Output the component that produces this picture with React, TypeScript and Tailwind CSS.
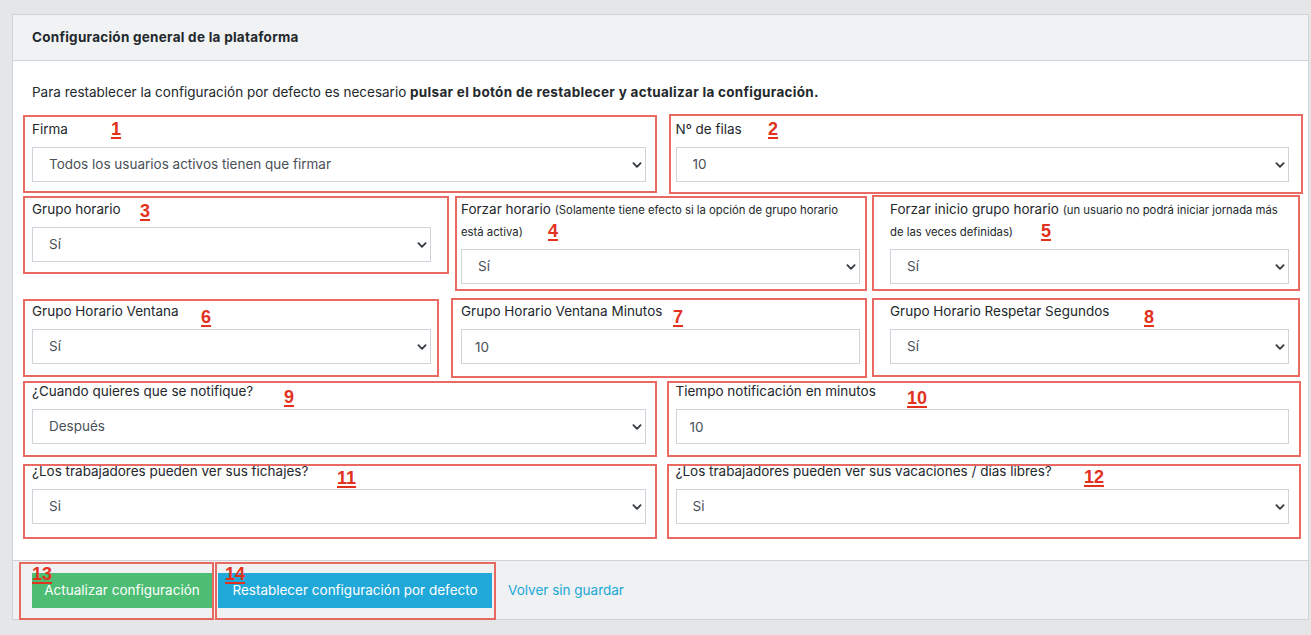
import React from "react";

const font = { fontFamily: "Inter, 'Liberation Sans', sans-serif" };

// Chevron drawn like the native select arrow
const Chevron = () => (
  <svg
    className="pointer-events-none absolute right-[4px] top-1/2 -translate-y-1/2"
    width="10"
    height="6"
    viewBox="0 0 16 10"
    fill="none"
  >
    <path d="M2 2l6 6 6-6" stroke="#343a40" strokeWidth="3" strokeLinecap="round" strokeLinejoin="round" />
  </svg>
);

const SelectBox = ({ value }: { value: string }) => (
  <div className="relative">
    <select
      defaultValue={value}
      className="block h-[35px] w-full appearance-none rounded-none border border-[#ced4da] bg-white pl-[16px] pr-6 text-[13.5px] text-[#495057] outline-none"
      style={font}
    >
      <option>{value}</option>
    </select>
    <Chevron />
  </div>
);

const InputBox = ({ value }: { value: string }) => (
  <input
    defaultValue={value}
    className="block h-[35px] w-full rounded-none border border-[#ced4da] bg-white pl-[13px] text-[13.5px] text-[#495057] outline-none"
    style={font}
  />
);

const Label = ({ children, tall }: { children: React.ReactNode; tall?: boolean }) => (
  <label
    className={
      tall
        ? "-mt-[2px] mb-[7px] block h-[44px] overflow-visible text-[13.5px] leading-[22px] text-[#23282c]"
        : "mb-[9px] block h-[18px] text-[13.5px] leading-[18px] text-[#23282c]"
    }
  >
    {children}
  </label>
);

const Small = ({ children }: { children: React.ReactNode }) => (
  <small className="align-baseline text-[11.3px] leading-[0]">{children}</small>
);

// Red annotation boxes and numbers laid over the screenshot
const boxes = [
  { l: 23, t: 115, r: 657, b: 193 },
  { l: 669, t: 114, r: 1303, b: 194 },
  { l: 23, t: 196, r: 449, b: 274 },
  { l: 455, t: 196, r: 867, b: 291 },
  { l: 872, t: 195, r: 1300, b: 291 },
  { l: 23, t: 299, r: 439, b: 377 },
  { l: 451, t: 298, r: 867, b: 378 },
  { l: 872, t: 298, r: 1300, b: 377 },
  { l: 23, t: 381, r: 657, b: 457 },
  { l: 667, t: 381, r: 1301, b: 457 },
  { l: 23, t: 464, r: 657, b: 539 },
  { l: 667, t: 464, r: 1301, b: 539 },
  { l: 19, t: 562, r: 214, b: 620 },
  { l: 215, t: 562, r: 496, b: 620 },
];

const numbers = [
  { n: "1", x: 111, y: 122 },
  { n: "2", x: 768, y: 122 },
  { n: "3", x: 140, y: 204 },
  { n: "4", x: 548, y: 224 },
  { n: "5", x: 1041, y: 224 },
  { n: "6", x: 201, y: 310 },
  { n: "7", x: 673, y: 310 },
  { n: "8", x: 1144, y: 310 },
  { n: "9", x: 284, y: 390 },
  { n: "10", x: 907, y: 391 },
  { n: "11", x: 337, y: 471 },
  { n: "12", x: 1084, y: 470 },
  { n: "13", x: 32, y: 567 },
  { n: "14", x: 225, y: 567 },
];

const Annotations = () => (
  <div className="pointer-events-none absolute inset-0">
    {boxes.map((b, i) => (
      <div
        key={i}
        className="absolute border-2 border-[#e65a52]/90"
        style={{ left: b.l, top: b.t, width: b.r - b.l, height: b.b - b.t }}
      />
    ))}
    {numbers.map((n) => (
      <span
        key={n.n}
        className="absolute text-[18px] font-bold leading-[18px] text-[#e2311d] underline decoration-2 underline-offset-2"
        style={{ left: n.x, top: n.y - 2, fontFamily: "'Liberation Sans', Arial, sans-serif" }}
      >
        {n.n}
      </span>
    ))}
  </div>
);

export default function App() {
  return (
    <div className="relative h-[635px] w-[1311px] overflow-hidden bg-[#e4e6e8] pt-[14px] pl-[12px] pr-[2px]" style={font}>
      <div className="border border-[#cfd3d6] bg-white">
        {/* header */}
        <div className="flex h-[46px] items-center border-b border-[#cfd3d6] bg-[#f0f2f4] px-[19px]">
          <h2 className="text-[13.5px] font-bold tracking-[0.26px] text-[#23282c]">
            Configuración general de la plataforma
          </h2>
        </div>

        {/* body */}
        <div className="px-[19px] pt-[22px] pb-[36px]">
          <p className="mb-[19px] h-[18px] text-[13.5px] leading-[18px] text-[#23282c]">
            Para restablecer la configuración por defecto es necesario{" "}
            <b className="font-bold tracking-[0.3px]">pulsar el botón de restablecer y actualizar la configuración.</b>
          </p>

          <div className="grid grid-cols-2 gap-x-[30px]">
            <div className="mb-[18px]">
              <Label>Firma</Label>
              <SelectBox value="Todos los usuarios activos tienen que firmar" />
            </div>
            <div className="mb-[18px]">
              <Label>Nº de filas</Label>
              <SelectBox value="10" />
            </div>
          </div>

          <div className="grid grid-cols-3 items-start gap-x-[30px]">
            <div className="mb-[18px]">
              <Label>Grupo horario</Label>
              <SelectBox value="Sí" />
            </div>
            <div className="mb-[18px]">
              <Label tall>
                Forzar horario <Small>(Solamente tiene efecto si la opción de grupo horario está activa)</Small>
              </Label>
              <SelectBox value="Sí" />
            </div>
            <div className="mb-[18px]">
              <Label tall>
                Forzar inicio grupo horario <Small>(un usuario no podrá iniciar jornada más de las veces definidas)</Small>
              </Label>
              <SelectBox value="Sí" />
            </div>
          </div>

          <div className="grid grid-cols-3 gap-x-[30px]">
            <div className="mb-[18px]">
              <Label>Grupo Horario Ventana</Label>
              <SelectBox value="Sí" />
            </div>
            <div className="mb-[18px]">
              <Label>Grupo Horario Ventana Minutos</Label>
              <InputBox value="10" />
            </div>
            <div className="mb-[18px]">
              <Label>Grupo Horario Respetar Segundos</Label>
              <SelectBox value="Sí" />
            </div>
          </div>

          <div className="grid grid-cols-2 gap-x-[30px]">
            <div className="mb-[18px]">
              <Label>¿Cuando quieres que se notifique?</Label>
              <SelectBox value="Después" />
            </div>
            <div className="mb-[18px]">
              <Label>Tiempo notificación en minutos</Label>
              <InputBox value="10" />
            </div>
          </div>

          <div className="grid grid-cols-2 gap-x-[30px]">
            <div>
              <Label>¿Los trabajadores pueden ver sus fichajes?</Label>
              <SelectBox value="Si" />
            </div>
            <div>
              <Label>¿Los trabajadores pueden ver sus vacaciones / días libres?</Label>
              <SelectBox value="Si" />
            </div>
          </div>
        </div>

        {/* footer */}
        <div className="flex items-center border-t border-[#cfd3d6] bg-[#eff1f3] px-[19px] pt-[12px] pb-[11px]">
          <button className="h-[35px] w-[180px] bg-[#4dbd74] text-[13.5px] text-white">Actualizar configuración</button>
          <button className="ml-[6px] h-[35px] w-[274px] bg-[#20a8d8] text-[13.5px] text-white">
            Restablecer configuración por defecto
          </button>
          <a className="ml-[16px] text-[13.5px] text-[#20a8d8]">Volver sin guardar</a>
        </div>
      </div>
      <Annotations />
    </div>
  );
}
